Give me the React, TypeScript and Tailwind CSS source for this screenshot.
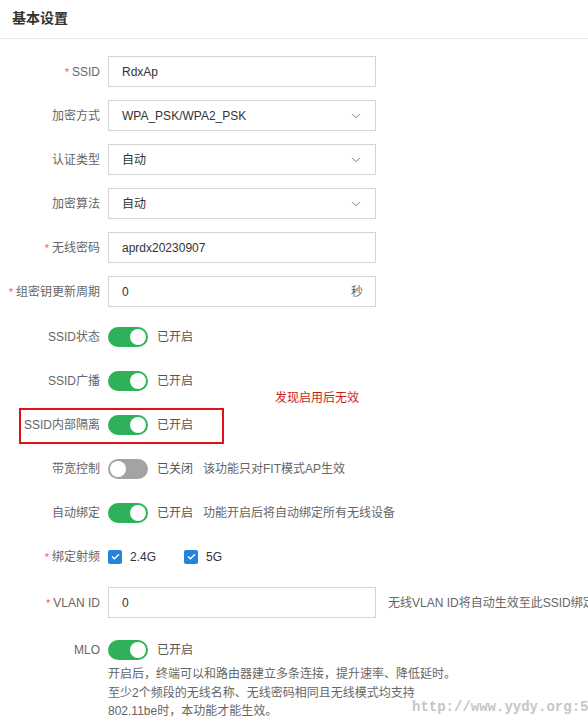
import { ChevronDown } from "lucide-react";

const FONT = "[font-family:'Liberation_Sans','Noto_Sans_CJK_SC',sans-serif]";

function Label({ text, required }: { text: string; required?: boolean }) {
  return (
    <div className="w-[100px] shrink-0 text-right text-[12px] text-[#666] whitespace-nowrap">
      {required && <span className="text-[#f25c5c] text-[11px] mr-[3px]">*</span>}
      {text}
    </div>
  );
}

function TextInput({ value, suffix }: { value: string; suffix?: string }) {
  return (
    <div className="w-[268px] shrink-0 h-[31px] border border-[#d4d4d4] flex items-center px-[13px] text-[12px] text-[#333]">
      <span className="flex-1">{value}</span>
      {suffix && <span className="text-[#666] mr-[-1px]">{suffix}</span>}
    </div>
  );
}

function Select({ value }: { value: string }) {
  return (
    <div className="w-[268px] shrink-0 h-[31px] border border-[#d4d4d4] flex items-center pl-[13px] pr-[12px] text-[12px] text-[#333]">
      <span className="flex-1">{value}</span>
      <ChevronDown size={14} strokeWidth={1.5} className="text-[#666]" />
    </div>
  );
}

function Toggle({ on }: { on: boolean }) {
  return (
    <div
      className={
        on
          ? "w-[40px] h-[20px] shrink-0 rounded-full bg-[#2eb158] flex items-center justify-end px-[2px]"
          : "w-[40px] h-[20px] shrink-0 rounded-full bg-[#a3a3a3] flex items-center justify-start px-[2px]"
      }
    >
      <div className="w-[16px] h-[16px] rounded-full bg-white" />
    </div>
  );
}

function ToggleRow({ label, on, hint }: { label: string; on: boolean; hint?: string }) {
  return (
    <div className="flex items-center gap-[8px] h-[31px]">
      <Label text={label} />
      <Toggle on={on} />
      <span className="text-[12px] text-[#555] ml-[1px]">{on ? "已开启" : "已关闭"}</span>
      {hint && <span className="text-[12px] text-[#666] ml-[2px]">{hint}</span>}
    </div>
  );
}

function Check({ label }: { label: string }) {
  return (
    <div className="flex items-center gap-[8px]">
      <div className="w-[14px] h-[14px] rounded-[2px] bg-[#2583dc] flex items-center justify-center">
        <svg width="9" height="7" viewBox="0 0 9 7" fill="none">
          <path d="M1 3.5L3.4 5.8L8 1.2" stroke="white" strokeWidth="1.4" />
        </svg>
      </div>
      <span className="text-[12px] text-[#333]">{label}</span>
    </div>
  );
}

export default function App() {
  return (
    <div className={`relative w-[588px] h-[717px] bg-white overflow-hidden ${FONT}`}>
      <div className="pl-[12px] h-[39px] flex items-center border-b border-[#e6e6e6]">
        <h2 className="text-[14px] font-bold text-[#333] mt-[-2px]">基本设置</h2>
      </div>

      <div className="flex flex-col gap-[13px] pt-[17px]">
        <div className="flex items-center gap-[8px]">
          <Label text="SSID" required />
          <TextInput value="RdxAp" />
        </div>
        <div className="flex items-center gap-[8px]">
          <Label text="加密方式" />
          <Select value="WPA_PSK/WPA2_PSK" />
        </div>
        <div className="flex items-center gap-[8px]">
          <Label text="认证类型" />
          <Select value="自动" />
        </div>
        <div className="flex items-center gap-[8px]">
          <Label text="加密算法" />
          <Select value="自动" />
        </div>
        <div className="flex items-center gap-[8px]">
          <Label text="无线密码" required />
          <TextInput value="aprdx20230907" />
        </div>
        <div className="flex items-center gap-[8px]">
          <Label text="组密钥更新周期" required />
          <TextInput value="0" suffix="秒" />
        </div>

        <div className="flex flex-col gap-[13px] pt-[1px]">
          <ToggleRow label="SSID状态" on />
          <ToggleRow label="SSID广播" on />
          <ToggleRow label="SSID内部隔离" on />
          <ToggleRow label="带宽控制" on={false} hint="该功能只对FIT模式AP生效" />
          <ToggleRow label="自动绑定" on hint="功能开启后将自动绑定所有无线设备" />
        </div>

        <div className="flex items-center gap-[8px] h-[31px]">
          <Label text="绑定射频" required />
          <div className="flex items-center gap-[28px]">
            <Check label="2.4G" />
            <Check label="5G" />
          </div>
        </div>

        <div className="flex items-center gap-[8px] mt-[2px]">
          <Label text="VLAN ID" required />
          <TextInput value="0" />
          <span className="text-[12px] text-[#666] ml-[4px] whitespace-nowrap">无线VLAN ID将自动生效至此SSID绑定</span>
        </div>

        <div className="flex flex-col mt-[3px]">
          <ToggleRow label="MLO" on />
          <div className="pl-[108px] text-[12px] text-[#666] leading-[19px]">
            <p>开启后，终端可以和路由器建立多条连接，提升速率、降低延时。</p>
            <p>至少2个频段的无线名称、无线密码相同且无线模式均支持</p>
            <p className="leading-[14px] mt-[1px]">802.11be时，本功能才能生效。</p>
          </div>
        </div>
      </div>

      {/* annotations */}
      <div className="absolute left-[19px] top-[408px] w-[205px] h-[36px] border-2 border-[#e3101a]" />
      <span className="absolute left-[275px] top-[389px] text-[12px] text-[#c81e1e]">发现启用后无效</span>
      <span className="absolute left-[412px] top-[697px] text-[14px] font-bold text-[#c6c6c6] whitespace-nowrap [font-family:'Liberation_Mono',monospace]">
        http://www.yydy.org:5
      </span>
    </div>
  );
}
